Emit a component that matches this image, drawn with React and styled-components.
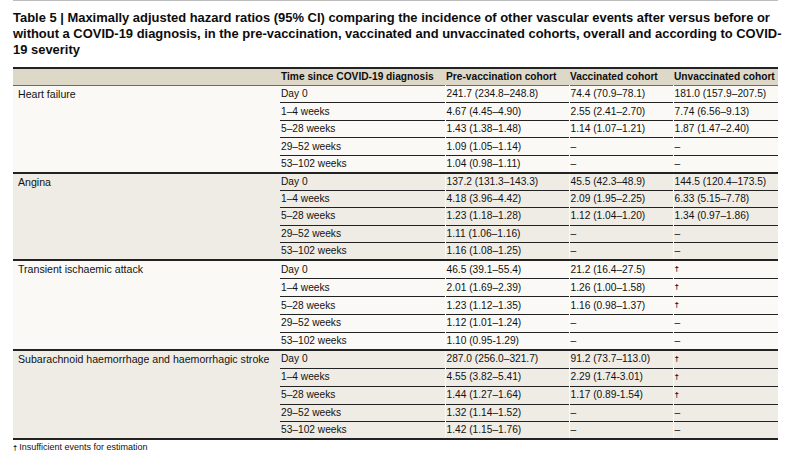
import React from "react";
import styled, { createGlobalStyle } from "styled-components";

const GlobalStyle = createGlobalStyle`
  html, body {
    margin: 0;
    padding: 0;
    background: #ffffff;
    font-family: "Liberation Sans", Arial, sans-serif;
    color: #111;
  }
`;

const Page = styled.div`
  width: 807px;
  height: 467px;
  padding: 0 29px 0 13px;
  box-sizing: border-box;
  overflow: hidden;
`;

const TopRule = styled.div`
  height: 1px;
  background: #bdbdbd;
`;

const Title = styled.h1`
  margin: 9px 0 9px 0;
  font-size: 12.95px;
  line-height: 16px;
  font-weight: 700;
  color: #0d0d0d;
  white-space: nowrap;
`;

const Table = styled.table`
  width: 765px;
  border-collapse: collapse;
  table-layout: fixed;
  font-size: 10.2px;
  border-top: 2px solid #222;
  border-bottom: 2px solid #222;
`;

const HeadRow = styled.tr`
  background: #ddd8c8;
  height: 16px;
  border-bottom: 1px solid #6a6a6a;
`;

const Th = styled.th`
  text-align: left;
  font-weight: 700;
  padding: 2px 0 2px ${({ $pad }) => $pad || 1}px;
  line-height: 12px;
  white-space: nowrap;
  color: #0d0d0d;
`;

const Row = styled.tr`
  height: 17.45px;
  background: ${({ $shade }) => ($shade ? "#efece5" : "#faf9f6")};
  border-top: ${({ $first }) => ($first ? "2px solid #222" : "none")};
`;

const LabelCell = styled.td`
  vertical-align: top;
  padding: 2px 0 0 5px;
  line-height: 12px;
  white-space: nowrap;
  font-size: 10.6px;
`;

const Cell = styled.td`
  padding: 2px 0 2px 1px;
  line-height: 12px;
  white-space: nowrap;
  border-top: ${({ $rule }) => ($rule ? "1.5px solid #222" : "none")};
  border-left: ${({ $sep }) => ($sep ? "1px solid rgba(255,255,255,0.7)" : "none")};
`;

const Dagger = styled.span`
  font-size: 8px;
  font-weight: 700;
  position: relative;
  top: -1px;
`;

const Footnote = styled.p`
  margin: 1px 0 0 0;
  font-size: 9px;
  line-height: 12px;
  color: #111;
`;

const FootMark = styled.span`
  font-size: 7.5px;
  font-weight: 700;
  margin-right: 2px;
`;

const times = ["Day 0", "1\u20134 weeks", "5\u201328 weeks", "29\u201352 weeks", "53\u2013102 weeks"];
const D = "\u2013";
const T = "\u2020";

const groups = [
  {
    label: "Heart failure",
    rows: [
      ["241.7 (234.8\u2013248.8)", "74.4 (70.9\u201378.1)", "181.0 (157.9\u2013207.5)"],
      ["4.67 (4.45\u20134.90)", "2.55 (2.41\u20132.70)", "7.74 (6.56\u20139.13)"],
      ["1.43 (1.38\u20131.48)", "1.14 (1.07\u20131.21)", "1.87 (1.47\u20132.40)"],
      ["1.09 (1.05\u20131.14)", D, D],
      ["1.04 (0.98\u20131.11)", D, D],
    ],
  },
  {
    label: "Angina",
    rows: [
      ["137.2 (131.3\u2013143.3)", "45.5 (42.3\u201348.9)", "144.5 (120.4\u2013173.5)"],
      ["4.18 (3.96\u20134.42)", "2.09 (1.95\u20132.25)", "6.33 (5.15\u20137.78)"],
      ["1.23 (1.18\u20131.28)", "1.12 (1.04\u20131.20)", "1.34 (0.97\u20131.86)"],
      ["1.11 (1.06\u20131.16)", D, D],
      ["1.16 (1.08\u20131.25)", D, D],
    ],
  },
  {
    label: "Transient ischaemic attack",
    rows: [
      ["46.5 (39.1\u201355.4)", "21.2 (16.4\u201327.5)", T],
      ["2.01 (1.69\u20132.39)", "1.26 (1.00\u20131.58)", T],
      ["1.23 (1.12\u20131.35)", "1.16 (0.98\u20131.37)", T],
      ["1.12 (1.01\u20131.24)", D, D],
      ["1.10 (0.95-1.29)", D, D],
    ],
  },
  {
    label: "Subarachnoid haemorrhage and haemorrhagic stroke",
    rows: [
      ["287.0 (256.0\u2013321.7)", "91.2 (73.7\u2013113.0)", T],
      ["4.55 (3.82\u20135.41)", "2.29 (1.74-3.01)", T],
      ["1.44 (1.27\u20131.64)", "1.17 (0.89-1.54)", T],
      ["1.32 (1.14\u20131.52)", D, D],
      ["1.42 (1.15\u20131.76)", D, D],
    ],
  },
];

const renderValue = (v) => (v === T ? <Dagger>{T}</Dagger> : v);

export default function App() {
  return (
    <Page>
      <GlobalStyle />
      <TopRule />
      <Title>
        Table 5 | Maximally adjusted hazard ratios (95% CI) comparing the incidence of other vascular events after versus before or
        <br />
        without a COVID-19 diagnosis, in the pre-vaccination, vaccinated and unvaccinated cohorts, overall and according to COVID-
        <br />
        19 severity
      </Title>
      <Table>
        <colgroup>
          <col style={{ width: 267 }} />
          <col style={{ width: 165 }} />
          <col style={{ width: 124 }} />
          <col style={{ width: 104 }} />
          <col style={{ width: 105 }} />
        </colgroup>
        <thead>
          <HeadRow>
            <Th $pad={5}></Th>
            <Th>Time since COVID-19 diagnosis</Th>
            <Th>Pre-vaccination cohort</Th>
            <Th>Vaccinated cohort</Th>
            <Th>Unvaccinated cohort</Th>
          </HeadRow>
        </thead>
        <tbody>
          {groups.map((g, gi) =>
            g.rows.map((r, ri) => (
              <Row key={g.label + ri} $shade={gi % 2 === 1} $first={ri === 0 && gi > 0}>
                {ri === 0 && <LabelCell rowSpan={5}>{g.label}</LabelCell>}
                <Cell $rule={ri > 0}>{times[ri]}</Cell>
                <Cell $rule={ri > 0} $sep>{r[0]}</Cell>
                <Cell $rule={ri > 0} $sep>{r[1]}</Cell>
                <Cell $rule={ri > 0} $sep>{renderValue(r[2])}</Cell>
              </Row>
            ))
          )}
        </tbody>
      </Table>
      <Footnote>
        <FootMark>{T}</FootMark>Insufficient events for estimation
      </Footnote>
    </Page>
  );
}
